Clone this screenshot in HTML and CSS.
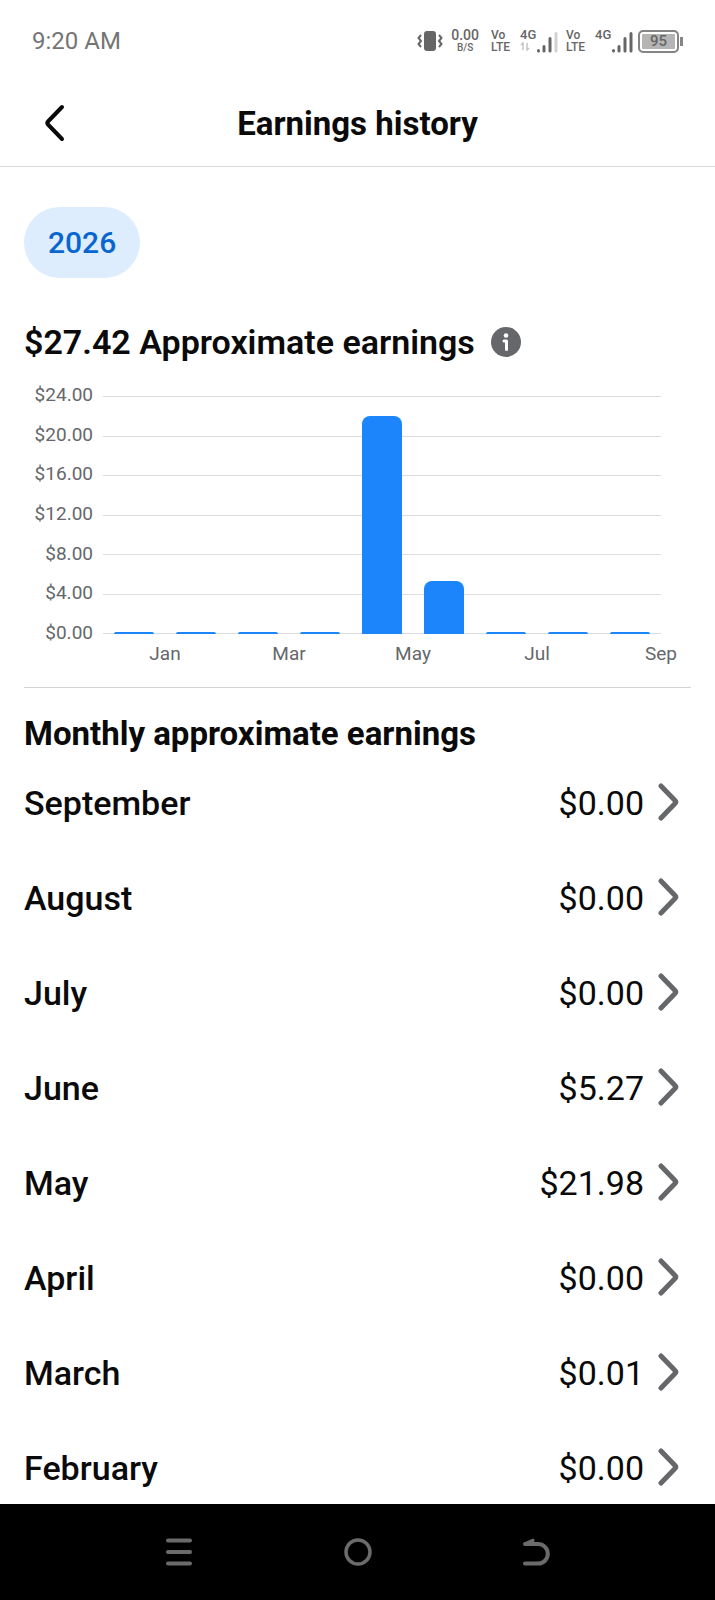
FILE: index.html
```
<!DOCTYPE html>
<html lang="en">
<head>
  <meta charset="UTF-8" />
  <meta name="viewport" content="width=device-width, initial-scale=1" />
  <title>Earnings history</title>
  <link rel="stylesheet" href="styles.css">
</head>
<body>
  <div class="status-bar">
    <span class="time">9:20 AM</span>
    <div class="status-icons">
      <svg class="vibrate" width="26" height="24" viewBox="0 0 26 24">
        <rect x="7" y="2" width="12" height="20" rx="3" fill="#666" />
        <path d="M4 6L1.500 9L4 12L1.500 15L4 18M22 6L24.500 9L22 12L24.500 15L22 18" fill="none" stroke="#666" stroke-width="2" />
      </svg>
      <span class="speed"><b>0.00</b><small>B/S</small></span>
      <span class="volte">Vo<br>LTE</span>
      <span class="signal">
        <span class="net">4G
          <svg width="10" height="9" viewBox="0 0 10 9"><path d="M1 3L3 1V8M7 1V8L9 6" fill="none" stroke="#c4c4c4" stroke-width="1.500" /></svg>
        </span>
        <svg width="22" height="24" viewBox="0 0 22 24" fill="none" stroke="#666" stroke-width="3" stroke-linecap="round">
          <path d="M2.500 20.500V21M8 16.500V21M14 8.500V21" />
          <path d="M20 3.500V21" stroke="#d2d2d2" />
        </svg>
      </span>
      <span class="volte">Vo<br>LTE</span>
      <span class="signal">
        <span class="net">4G</span>
        <svg width="22" height="24" viewBox="0 0 22 24" fill="none" stroke="#666" stroke-width="3" stroke-linecap="round">
          <path d="M2.500 20.500V21M8 16.500V21M14 8.500V21M20 3.500V21" />
        </svg>
      </span>
      <span class="battery">95</span>
    </div>
  </div>

  <header class="header">
    <button class="back" aria-label="Back">
      <svg width="24" height="40" viewBox="0 0 24 40"><path d="M20 3L6 17.500Q4.500 19 6 20.500L20 35" fill="none" stroke="#0a0a0a" stroke-width="4" stroke-linecap="round" /></svg>
    </button>
    <h1>Earnings history</h1>
  </header>

  <main>
    <button class="year">2026</button>

    <div class="total">
      <h2>$27.42 Approximate earnings</h2>
      <button class="info" aria-label="About approximate earnings">
        <svg width="30" height="30" viewBox="0 0 30 30">
          <circle cx="15" cy="15" r="15" fill="#65676b" />
          <circle cx="15" cy="8.500" r="2.300" fill="#fff" />
          <path d="M13 14H15.500V22.500" fill="none" stroke="#fff" stroke-width="3" stroke-linecap="round" stroke-linejoin="round" />
        </svg>
      </button>
    </div>

    <div class="chart">
      <div class="y-axis">
        <span>$24.00</span>
        <span>$20.00</span>
        <span>$16.00</span>
        <span>$12.00</span>
        <span>$8.00</span>
        <span>$4.00</span>
        <span>$0.00</span>
      </div>
      <div class="lines"><i></i><i></i><i></i><i></i><i></i><i></i><i></i></div>
      <div class="bars">
        <div class="bar" style="height: 0%"></div>
        <div class="bar" style="height: 0%"></div>
        <div class="bar" style="height: 0%"></div>
        <div class="bar" style="height: 0%"></div>
        <div class="bar" style="height: 91.6%"></div>
        <div class="bar" style="height: 22.4%"></div>
        <div class="bar" style="height: 0%"></div>
        <div class="bar" style="height: 0%"></div>
        <div class="bar" style="height: 0%"></div>
      </div>
      <div class="x-axis">
        <span>Jan</span>
        <span></span>
        <span>Mar</span>
        <span></span>
        <span>May</span>
        <span></span>
        <span>Jul</span>
        <span></span>
        <span>Sep</span>
      </div>
    </div>

    <h2 class="list-title">Monthly approximate earnings</h2>

    <svg class="sprite" width="0" height="0">
      <symbol id="chevron" viewBox="0 0 24 40"><path d="M4 3L18 17.500Q19.500 19 18 20.500L4 35" fill="none" stroke="#65676b" stroke-width="5" stroke-linecap="round" /></symbol>
    </svg>
    <nav class="months">
      <a href="#september"><span>September</span><span class="amount">$0.00</span><svg><use href="#chevron" /></svg></a>
      <a href="#august"><span>August</span><span class="amount">$0.00</span><svg><use href="#chevron" /></svg></a>
      <a href="#july"><span>July</span><span class="amount">$0.00</span><svg><use href="#chevron" /></svg></a>
      <a href="#june"><span>June</span><span class="amount">$5.27</span><svg><use href="#chevron" /></svg></a>
      <a href="#may"><span>May</span><span class="amount">$21.98</span><svg><use href="#chevron" /></svg></a>
      <a href="#april"><span>April</span><span class="amount">$0.00</span><svg><use href="#chevron" /></svg></a>
      <a href="#march"><span>March</span><span class="amount">$0.01</span><svg><use href="#chevron" /></svg></a>
      <a href="#february"><span>February</span><span class="amount">$0.00</span><svg><use href="#chevron" /></svg></a>
    </nav>
  </main>

  <div class="system-nav">
    <button aria-label="Recent apps">
      <svg width="28" height="30" viewBox="0 0 28 30"><path d="M3 3.500H25M3 15H25M3 26.500H25" fill="none" stroke="#6b6b6b" stroke-width="4" stroke-linecap="round" /></svg>
    </button>
    <button aria-label="Home">
      <svg width="28" height="30" viewBox="0 0 28 30"><circle cx="14" cy="15" r="12" fill="none" stroke="#6b6b6b" stroke-width="3.500" /></svg>
    </button>
    <button aria-label="Back">
      <svg width="28" height="30" viewBox="0 0 28 30">
        <path d="M3 7H16A9.800 9.800 0 0 1 16 26.600H3" fill="none" stroke="#6b6b6b" stroke-width="4" stroke-linecap="round" />
        <path d="M2 5.500L11 1.500L12.500 2.500L12 7H3Z" fill="#6b6b6b" />
      </svg>
    </button>
  </div>
</body>
</html>
```
FILE: styles.css
```
* { box-sizing: border-box; }
body {
  margin: 0;
  height: 100vh;
  display: flex;
  flex-direction: column;
  background: #fff;
  color: #0a0a0a;
  font-family: Roboto, sans-serif;
}
button {
  border: none;
  background: none;
  padding: 0;
  font-family: inherit;
  cursor: pointer;
}
svg { display: block; flex-shrink: 0; }
h1, h2 { margin: 0; font-size: 33px; line-height: 42px; font-weight: 700; }

/* status bar */
.status-bar {
  flex-shrink: 0;
  height: 82px;
  padding: 0 36px 0 32px;
  display: flex;
  align-items: center;
  justify-content: space-between;
  color: #757575;
}
.time { font-size: 24px; }
.status-icons { display: flex; align-items: center; color: #666; }
.speed {
  display: flex;
  flex-direction: column;
  align-items: center;
  margin-left: 8px;
}
.speed b { font-size: 14px; line-height: 14px; font-weight: 500; }
.speed small { font-size: 10px; line-height: 12px; font-weight: 500; }
.volte { margin-left: 12px; width: 20px; font-size: 12px; line-height: 12px; font-weight: 500; }
.signal + .volte { margin-left: 8px; }
.signal { display: flex; align-items: flex-end; margin-left: 9px; }
.net { width: 16px; height: 26px; font-size: 13px; line-height: 14px; font-weight: 500; }
.battery {
  position: relative;
  margin-left: 5px;
  width: 41px;
  height: 23px;
  border: 2px solid #858585;
  border-radius: 5px;
  background: #b5b5b5;
  box-shadow: inset 0 0 0 2px #fff;
  font-size: 15px;
  line-height: 19px;
  font-weight: 500;
  text-align: center;
}
.battery::after {
  content: "";
  position: absolute;
  right: -6px;
  top: 5px;
  width: 3px;
  height: 9px;
  background: #858585;
}

/* header */
.header {
  flex-shrink: 0;
  height: 85px;
  padding: 0 42px;
  display: grid;
  grid-template-columns: 24px 1fr 24px;
  align-items: center;
  border-bottom: 1px solid #dadada;
  text-align: center;
}

main { flex: 1; min-height: 0; overflow: hidden; padding: 40px 24px 0; }
.year {
  height: 71px;
  padding: 0 24px;
  border-radius: 36px;
  background: #deedfd;
  color: #0866d0;
  font-size: 30px;
  font-weight: 500;
}
.total { display: flex; align-items: center; gap: 16px; margin-top: 43px; }
.total h2 { font-size: 34px; font-weight: 600; }

/* chart */
.chart {
  display: grid;
  grid-template-columns: 69px 1fr;
  grid-template-rows: 238px 53px;
  column-gap: 10px;
  margin-top: 33px;
  padding-right: 30px;
  color: #65676b;
  font-size: 19px;
  line-height: 24px;
}
.y-axis {
  margin: -13px 0 -11px;
  display: flex;
  flex-direction: column;
  justify-content: space-between;
  text-align: right;
}
.lines, .bars { grid-column: 2; grid-row: 1; }
.lines { display: flex; flex-direction: column; justify-content: space-between; }
.lines i { height: 1px; background: #dcdde0; }
.bars, .x-axis { display: grid; grid-template-columns: repeat(9, 1fr); }
.bars { align-items: end; justify-items: center; }
.bar {
  width: 63%;
  min-height: 2px;
  border-radius: 8px 8px 0 0;
  background: #1c85fc;
}
.x-axis { grid-column: 2; padding-top: 8px; text-align: center; }
/* labels sit on the right edge of their month's slot */
.x-axis span { margin: 0 -50% 0 50%; }

/* monthly list */
.list-title { border-top: 1px solid #d0d2d5; padding-top: 25px; }
.sprite { position: absolute; }
.months a {
  display: flex;
  align-items: center;
  height: 95px;
  padding-right: 10px;
  color: inherit;
  font-size: 34px;
  font-weight: 500;
  text-decoration: none;
}
.months .amount { margin: 0 13px 0 auto; font-weight: 400; }
.months svg { width: 24px; height: 40px; }

/* android buttons */
.system-nav {
  flex-shrink: 0;
  height: 96px;
  padding: 0 12.5%;
  display: grid;
  grid-template-columns: repeat(3, 1fr);
  justify-items: center;
  background: #000;
}
```
